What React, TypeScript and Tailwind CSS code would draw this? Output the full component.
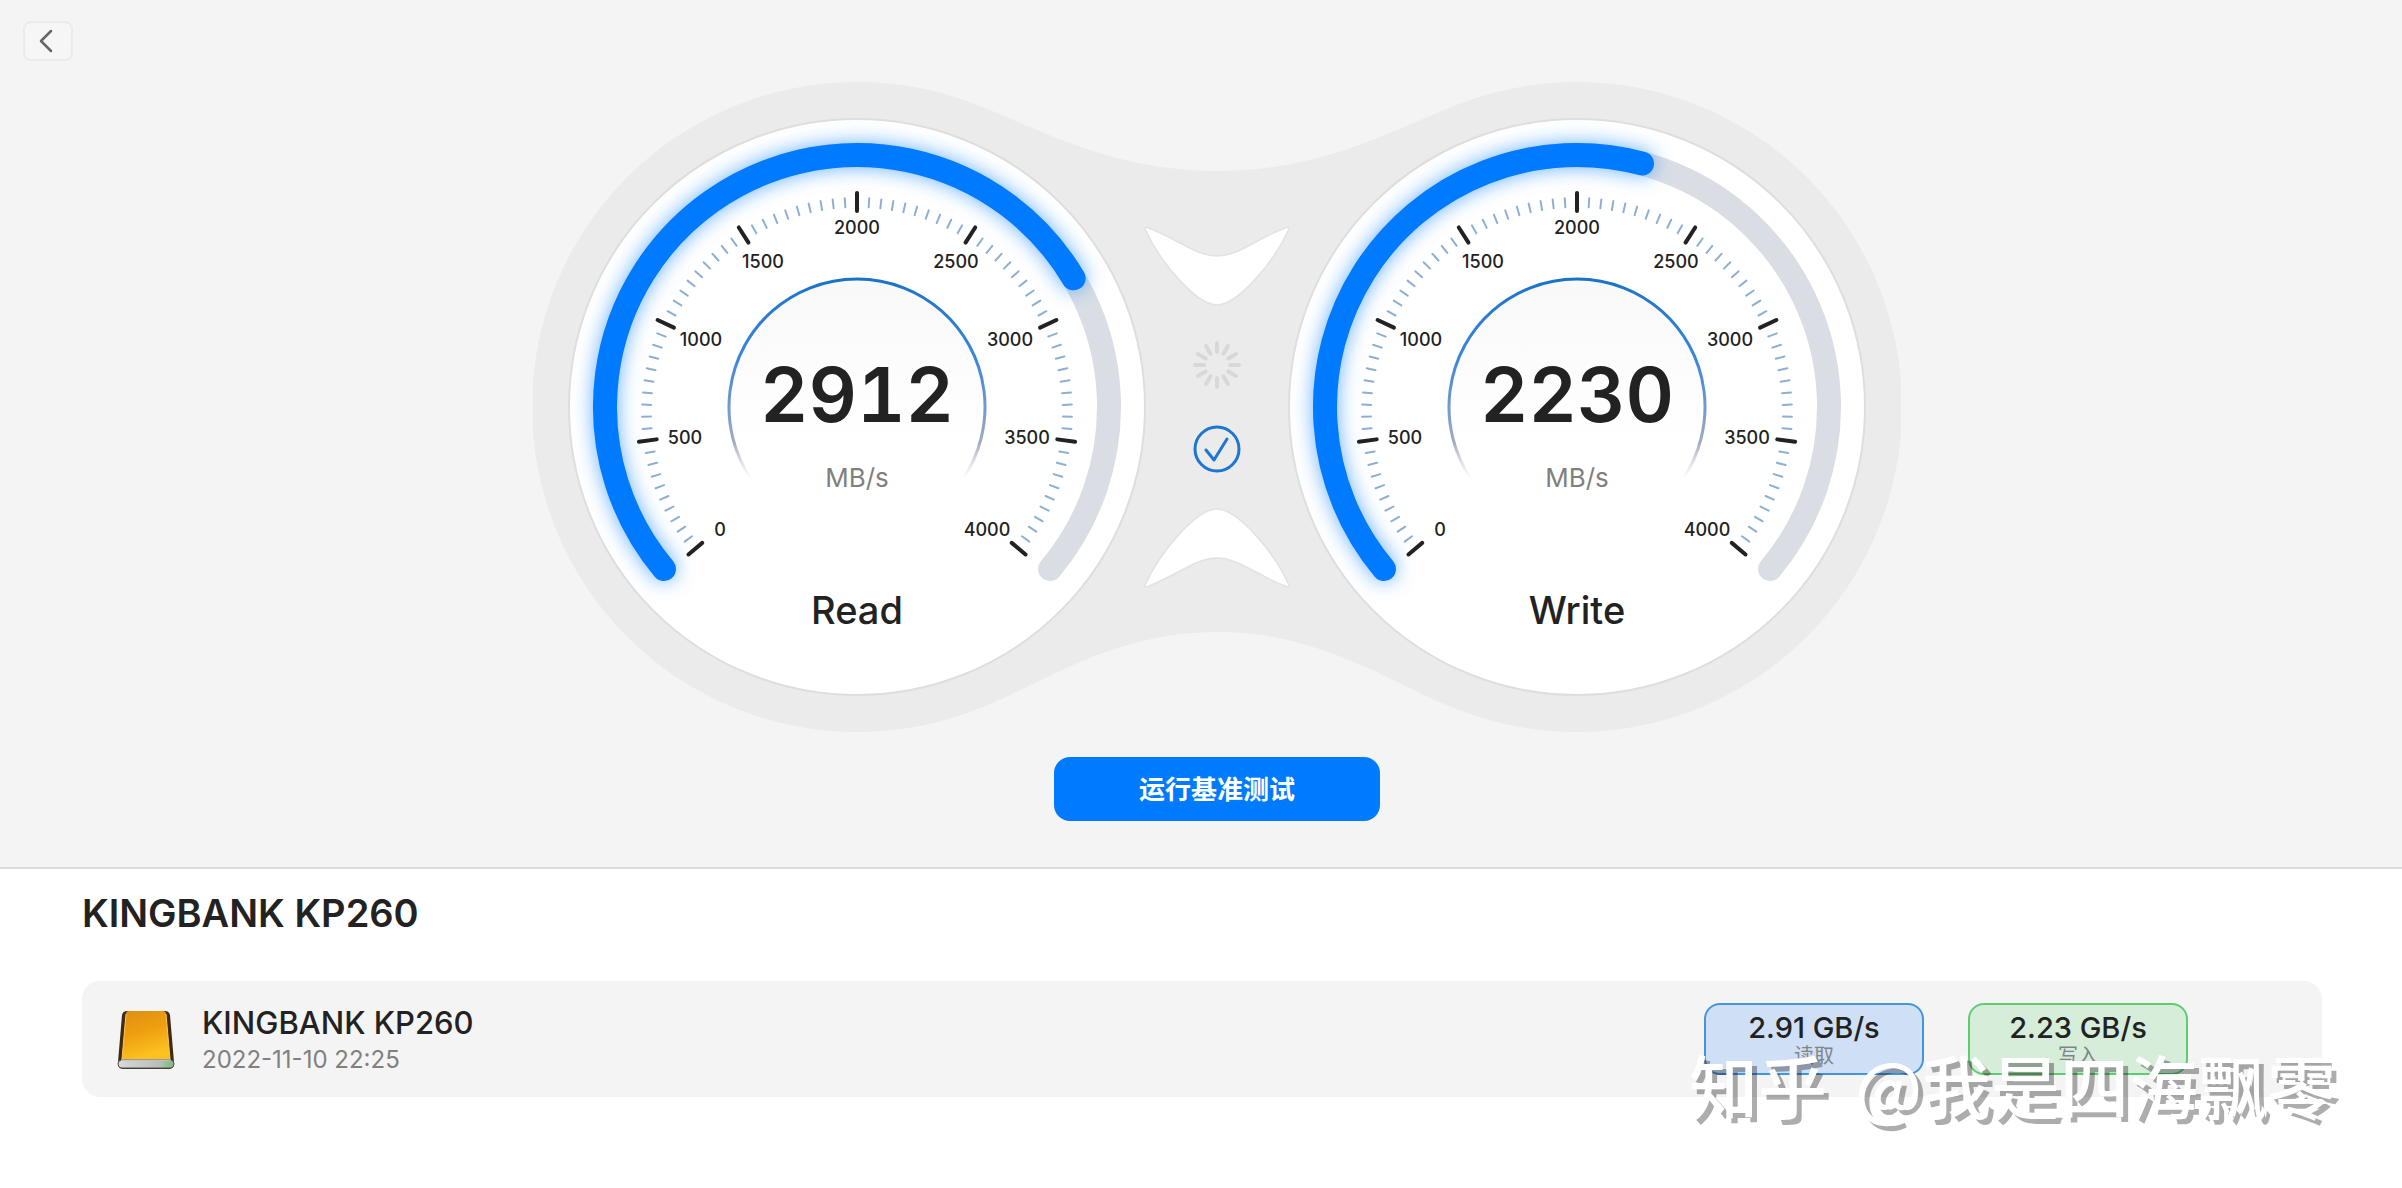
import { clsx } from "clsx"

const MAX_SPEED = 4000
const SWEEP = 260
const START = -130

// label positions are relative to the gauge centre, y is the text baseline
const labels = [
  { value: 0, x: -137, y: 129 },
  { value: 500, x: -172, y: 37 },
  { value: 1000, x: -156, y: -61 },
  { value: 1500, x: -94, y: -139 },
  { value: 2000, x: 0, y: -173 },
  { value: 2500, x: 99, y: -139 },
  { value: 3000, x: 153, y: -61 },
  { value: 3500, x: 170, y: 37 },
  { value: 4000, x: 130, y: 129 },
]

function polar(radius: number, degrees: number) {
  const rad = (degrees * Math.PI) / 180
  return { x: radius * Math.sin(rad), y: -radius * Math.cos(rad) }
}

function arc(radius: number, from: number, to: number) {
  const a = polar(radius, from)
  const b = polar(radius, to)
  const large = to - from > 180 ? 1 : 0
  return `M${a.x} ${a.y}A${radius} ${radius} 0 ${large} 1 ${b.x} ${b.y}`
}

interface GaugeProps {
  cx: number
  name: string
  speed: number
}

function Gauge({ cx, name, speed }: GaugeProps) {
  const ticks = Array.from({ length: 81 }, (_, i) => i)
  const valueArc = arc(252, START, START + (speed / MAX_SPEED) * SWEEP)

  return (
    <g transform={`translate(${cx} 325)`}>
      <circle r="288" fill="#fff" stroke="#dedede" strokeWidth="2" />
      <path d={arc(252, START, START + SWEEP)} fill="none" stroke="#dadee4" strokeWidth="24" strokeLinecap="round" />
      <path d={valueArc} fill="none" stroke="#007aff" strokeOpacity="0.6" strokeWidth="24" strokeLinecap="round" filter="url(#glow)" />
      <path d={valueArc} fill="none" stroke="#007aff" strokeWidth="24" strokeLinecap="round" />

      <g transform="translate(0 6)" strokeLinecap="round">
        {ticks.map((i) => {
          const major = i % 10 === 0
          return (
            <line
              key={i}
              y1={major ? -220 : -215}
              y2={major ? -202 : -206}
              stroke={major ? "#222" : "#8db0d2"}
              strokeWidth={major ? 4 : 2}
              transform={`rotate(${START + (i * SWEEP) / 80})`}
            />
          )
        })}
      </g>
      {labels.map((l) => (
        <text key={l.value} x={l.x} y={l.y} textAnchor="middle" className="fill-[#222] text-[18px] font-medium">
          {l.value}
        </text>
      ))}

      <circle r="128" fill="url(#dial-fill)" />
      <path d={arc(128, -124, 124)} fill="none" stroke="url(#dial-line)" strokeWidth="3" />

      <text y="15" textAnchor="middle" className="fill-[#222] text-[75px] font-semibold tabular-nums">{speed}</text>
      <text y="80" textAnchor="middle" className="fill-[#808080] text-[26px]">MB/s</text>
      <text y="217" textAnchor="middle" className="fill-[#222] text-[38px] font-medium">{name}</text>
    </g>
  )
}

const ARROW =
  "M612 147Q611 144 616 146C646 158 664 174 684 174C704 174 722 158 752 146Q757 144 756 147C740 182 704 223 684 223C664 223 628 182 612 147Z"

function SpeedBoard() {
  return (
    <svg viewBox="0 0 1368 650" className="w-[1368px] max-w-full" role="img" aria-label="Read 2912 MB/s, Write 2230 MB/s">
      <defs>
        <filter id="glow" filterUnits="userSpaceOnUse" x="-310" y="-310" width="620" height="620">
          <feGaussianBlur stdDeviation="10" />
        </filter>
        <linearGradient id="dial-fill" x1="0" y1="0" x2="0" y2="1">
          <stop offset="0" stopColor="#f9f9f9" />
          <stop offset="0.65" stopColor="#fff" />
        </linearGradient>
        <linearGradient id="dial-line" gradientUnits="userSpaceOnUse" x1="0" y1="-128" x2="0" y2="72">
          <stop offset="0" stopColor="#1b73c8" />
          <stop offset="0.4" stopColor="#3d86dc" />
          <stop offset="0.68" stopColor="#7d9bd0" />
          <stop offset="0.82" stopColor="#a3acbd" />
          <stop offset="1" stopColor="#ccc" stopOpacity="0" />
        </linearGradient>
      </defs>

      <path
        d="M324 0A325 325 0 0 0 324 650A325 325 0 0 0 442 628C507 604 577 550 684 550C791 550 861 604 926 628A325 325 0 0 0 1044 650A325 325 0 0 0 1044 0A325 325 0 0 0 926 22C861 47 791 89 684 89C577 89 507 47 442 22A325 325 0 0 0 324 0Z"
        fill="#ebebeb"
      />

      <g fill="#fff" stroke="#e2e2e2" strokeWidth="1.5">
        <path d={ARROW} />
        <path d={ARROW} transform="matrix(1 0 0 -1 0 650)" />
      </g>

      <g stroke="#d8d8d8" strokeWidth="4" strokeLinecap="round" transform="translate(684 283)">
        {Array.from({ length: 12 }, (_, i) => (
          <line key={i} y1="-22" y2="-13" transform={`rotate(${i * 30})`} />
        ))}
      </g>
      <g fill="none" stroke="#1c76d4" strokeWidth="3" strokeLinecap="round" strokeLinejoin="round" transform="translate(684 367)">
        <circle r="22" />
        <path d="M-11 1L-3 11L10 -10" />
      </g>

      <Gauge cx={324} name="Read" speed={2912} />
      <Gauge cx={1044} name="Write" speed={2230} />
    </svg>
  )
}

function DriveIcon() {
  return (
    <svg viewBox="0 0 58 60" className="h-[60px] w-[58px] shrink-0" aria-hidden="true">
      <defs>
        <linearGradient id="drive-top" x1="0" y1="0" x2="0.3" y2="1">
          <stop offset="0" stopColor="#dd8f12" />
          <stop offset="0.5" stopColor="#ee9f10" />
          <stop offset="1" stopColor="#fcc11f" />
        </linearGradient>
        <linearGradient id="drive-front" x1="0" y1="0" x2="1" y2="0">
          <stop offset="0" stopColor="#d8d8d8" />
          <stop offset="0.75" stopColor="#b9bdb9" />
          <stop offset="0.92" stopColor="#7fc487" />
          <stop offset="1" stopColor="#a5a5a5" />
        </linearGradient>
      </defs>
      <path d="M10 2H48Q52 2 53 6L57 53Q58 60 52 60H6Q0 60 1 53L5 6Q6 2 10 2Z" fill="#3e2c12" />
      <path d="M12 2H46Q49 2 49 5L53 50H5L9 5Q9 2 12 2Z" fill="url(#drive-top)" />
      <path d="M9 5L5 50M49 5L53 50" fill="none" stroke="#ffc74a" strokeWidth="1" />
      <rect x="1" y="51" width="56" height="8" rx="4" fill="url(#drive-front)" stroke="#555" strokeWidth="1" />
      <path d="M4 51H54" stroke="#f5f5f5" strokeWidth="1" />
    </svg>
  )
}

interface SpeedBadgeProps {
  speed: string
  label: string
  tone: "read" | "write"
}

function SpeedBadge({ speed, label, tone }: SpeedBadgeProps) {
  return (
    <div
      className={clsx(
        "flex h-[72px] w-[220px] flex-col items-center justify-center rounded-2xl border-2 pt-0.5",
        tone === "read" ? "border-[#4595da] bg-[#cfdff6]" : "border-[#5fcc74] bg-[#d5edd9]"
      )}
    >
      <span className="text-[29px] leading-8 font-medium">{speed}</span>
      <span className="text-[20px] leading-6 text-[#808488]">{label}</span>
    </div>
  )
}

export default function App() {
  return (
    <div className="relative min-h-screen bg-white font-['Inter','Noto_Sans_CJK_SC',sans-serif] text-[#222]">
      <section className="flex items-start border-b-2 border-[#dcdcdc] bg-[#f4f4f4] pr-[41px] pl-[23px]">
        <button
          type="button"
          aria-label="返回"
          className="mt-[21px] flex h-10 w-[50px] shrink-0 items-center justify-center rounded-lg border-2 border-[#ebebeb] bg-[#f6f6f6] text-[#666]"
        >
          <svg viewBox="0 0 14 24" className="mr-1 h-6 w-[14px]" fill="none" stroke="currentColor" strokeWidth="2.5" strokeLinecap="round" strokeLinejoin="round">
            <path d="M12 2L2 12L12 22" />
          </svg>
        </button>
        <div className="flex min-w-0 flex-1 flex-col items-center pt-[82px] pb-[46px]">
          <SpeedBoard />
          <button type="button" className="mt-[25px] h-16 w-[326px] rounded-2xl bg-[#007aff] text-[26px] font-bold text-white">
            运行基准测试
          </button>
        </div>
      </section>

      <section className="px-20 pt-5 pl-[82px]">
        <h2 className="text-[38px] leading-[48px] font-semibold">KINGBANK KP260</h2>
        <div className="mt-11 flex h-[116px] items-center rounded-[18px] bg-[#f4f4f4] pr-[134px] pl-[35px]">
          <DriveIcon />
          <div className="ml-[27px] flex-1 pt-1">
            <h3 className="text-[31px] leading-[37px] font-medium">KINGBANK KP260</h3>
            <p className="text-[24px] leading-[37px] text-[#808080]">2022-11-10 22:25</p>
          </div>
          <div className="flex gap-11">
            <SpeedBadge speed="2.91 GB/s" label="读取" tone="read" />
            <SpeedBadge speed="2.23 GB/s" label="写入" tone="write" />
          </div>
        </div>
      </section>

      <div className="pointer-events-none absolute right-[66px] bottom-[60px] flex gap-7 font-['Noto_Sans_CJK_SC',sans-serif] text-[69px] leading-[88px] font-medium text-white [text-shadow:5px_5px_0_rgba(0,0,0,0.32)]">
        <span>知乎</span>
        <span>@我是四海飘零</span>
      </div>
    </div>
  )
}
